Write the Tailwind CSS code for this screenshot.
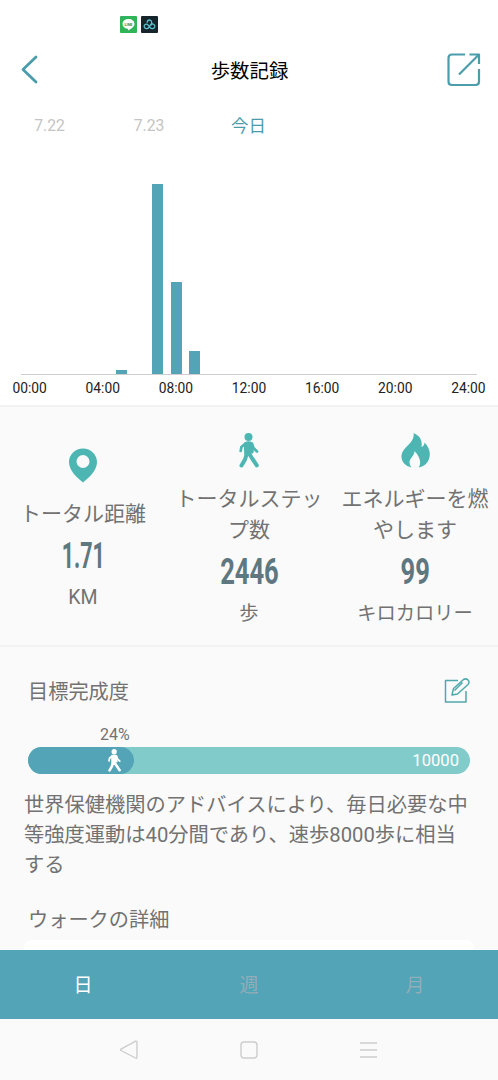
<!DOCTYPE html>
<html lang="ja">
<head>
<meta charset="utf-8">
<meta name="viewport" content="width=device-width, initial-scale=1">
<title>歩数記録</title>
<script src="https://cdn.jsdelivr.net/npm/@tailwindcss/browser@4"></script>
</head>
<body class="bg-[#fafafa]">
<svg class="hidden">
  <symbol id="walker" viewBox="0 0 20 35">
    <circle cx="9.500" cy="4" r="4" fill="currentColor"/>
    <path d="M6 10.500Q9.500 8.500 13 10.500L13.500 19L6.500 21Z" fill="currentColor" stroke="currentColor" stroke-width="2.500" stroke-linejoin="round"/>
    <path d="M6 11L2.400 14L1.700 18M13 11L14.500 15L18 18.500" fill="none" stroke="currentColor" stroke-width="2.700" stroke-linecap="round" stroke-linejoin="round"/>
    <path d="M8 20L6 26.500L2.500 32.500M10 20.500L13.500 26L17.800 32.300" fill="none" stroke="currentColor" stroke-width="4" stroke-linecap="round" stroke-linejoin="round"/>
  </symbol>
</svg>
<div class="flex h-[1080px] w-[498px] flex-col overflow-hidden bg-[#fafafa] font-['Roboto','Noto_Sans_CJK_JP',sans-serif] text-[#727272]">
  <section class="flex h-[405px] shrink-0 flex-col bg-white">
    <div class="flex h-10 gap-1 pt-4 pl-[120px]">
      <svg class="size-[17px]" viewBox="0 0 17 17"><rect width="17" height="17" rx="1" fill="#2fb457"/><path d="M8.500 3C5 3 2.500 5 2.500 8c0 2.700 2.300 4.400 5 4.800.7.100.6.700.5 1.700 3-1.600 6.500-3.800 6.500-6.500 0-3-2.600-5-6-5Z" fill="#fff"/><text x="8.500" y="9.500" text-anchor="middle" font-size="3.800" font-weight="700" fill="#2b8a48">LINE</text></svg>
      <svg class="size-[17px]" viewBox="0 0 17 17"><rect width="17" height="17" rx="1" fill="#15252b"/><g fill="none" stroke="#5cc2cc" stroke-width="1.300" stroke-linecap="round"><path d="M9.800 9C11.500 7 14.200 8.500 13.800 10.700C13.300 13 10.500 13.300 9.200 11.700L7.200 9.200C5.500 7 2.800 8.500 3.200 10.700C3.700 13 6.500 13.300 7.800 11.500L10.300 8C11.500 6 10 4 8.500 4Q6.300 4 6.200 6.300"/></g></svg>
    </div>
    <header class="flex h-[60px] items-center justify-between pr-[17px] pl-5">
      <svg class="h-[30px] w-[34px]" viewBox="0 0 34 30" fill="none" stroke="#4b9dac" stroke-width="2.800" stroke-linecap="round" stroke-linejoin="round"><path d="M16 2L3 14.500L16 27"/></svg>
      <h1 class="-ml-[2px] pt-[3px] text-[19.400px] text-black">歩数記録</h1>
      <svg class="h-[34px] w-[34px]" viewBox="0 0 34 34" fill="none" stroke="#4b9dac" stroke-width="2.200"><path d="M18 1.500H5Q1.500 1.500 1.500 5V28.500Q1.500 32 5 32H28.500Q32 32 32 28.500V16M22.500 1.500H32V11M32 1.500L12 21.500" stroke-linejoin="round"/></svg>
    </header>
    <nav class="flex h-[50px] items-center pt-[2px] text-[15.700px] text-[#c4c4c4]">
      <span class="w-[99px] text-center">7.22</span>
      <span class="w-[100px] text-center">7.23</span>
      <span class="w-[99px] text-center text-[17.500px] text-[#4b9dac]">今日</span>
    </nav>
    <div class="mx-[21px] grid h-[225px] shrink-0 grid-cols-25 items-end justify-items-center border-b-[1.500px] border-[#cfcfcf]">
      <div class="col-start-6 h-1 w-[11px] bg-[#53a4b7]"></div>
      <div class="col-start-8 h-[190px] w-[11px] bg-[#53a4b7]"></div>
      <div class="col-start-9 h-[92px] w-[11px] bg-[#53a4b7]"></div>
      <div class="col-start-10 h-[23px] w-[11px] bg-[#53a4b7]"></div>
    </div>
    <div class="-mx-[7px] grid h-[26px] shrink-0 grid-cols-7 items-center text-center text-[13.800px] text-[#222]">
      <span>00:00</span><span>04:00</span><span>08:00</span><span>12:00</span><span>16:00</span><span>20:00</span><span>24:00</span>
    </div>
  </section>

  <section class="grid h-[242px] shrink-0 grid-cols-3 items-center border-y-2 border-[#f2f2f2] pt-[7px] text-center">
    <div class="flex flex-col items-center">
      <svg class="h-[35px] w-7" viewBox="0 0 28 35"><path fill="#4db6b2" fill-rule="evenodd" d="M14 .5C6.300.5 0 6.500 0 14c0 8 7 15 14 20.500C21 29 28 22 28 14 28 6.500 21.700.5 14 .5ZM14 7a6.500 6.500 0 1 1 0 13 6.500 6.500 0 0 1 0-13Z"/></svg>
      <p class="mt-4 w-full text-[21px] leading-[31px]">トータル距離</p>
      <p class="mt-1.5 h-10 scale-x-[.58] text-[37px] leading-10 font-bold text-[#5f777e]">1.71</p>
      <p class="mt-[9px] text-[19.500px] leading-[26px]">KM</p>
    </div>
    <div class="flex flex-col items-center">
      <svg class="h-[35px] w-5 text-[#4db6b2]"><use href="#walker"/></svg>
      <p class="mt-4 w-full text-[21px] leading-[31px]">トータルステッ<br>プ数</p>
      <p class="mt-1.5 h-10 scale-x-[.69] text-[37px] leading-10 font-bold text-[#5f777e]">2446</p>
      <p class="mt-[9px] text-[19.300px] leading-[26px]">歩</p>
    </div>
    <div class="flex flex-col items-center">
      <svg class="h-[35px] w-[29px]" viewBox="0 0 29 35"><path fill="#4db6b2" d="M12.500 0C21 4 21 9 20.500 14C22.500 13.500 23.500 11.500 23.500 9.500C28 14 29.500 19 28.500 24C27.500 29.500 23.500 33.500 17.500 34.500C20.500 31 19.500 24 13.500 18C13.500 23 8.500 25 8.500 29.500Q8.500 32.500 10.500 34.500C4 33 0 28.500 .5 22.500C1 14 14.500 10 12.500 0Z"/></svg>
      <p class="mt-4 w-full text-[21px] leading-[31px]">エネルギーを燃<br>やします</p>
      <p class="mt-1.5 h-10 scale-x-[.69] text-[37px] leading-10 font-bold text-[#5f777e]">99</p>
      <p class="mt-[9px] text-[19.300px] leading-[26px]">キロカロリー</p>
    </div>
  </section>

  <section class="flex h-[303px] shrink-0 flex-col pt-7">
    <div class="flex h-8 shrink-0 items-center justify-between px-7 text-[20.200px]">
      <h2 class="pt-[3px]">目標完成度</h2>
      <svg class="h-[26px] w-[26px]" viewBox="0 0 26 26" fill="none" stroke="#4fa9ab" stroke-width="1.500" stroke-linejoin="round"><path d="M14 2.500H1.500V24H22V13M8 17L9.500 10.500L19.500 1.500Q22 0 24 2Q26 4 24 6.500L13.500 16ZM18.500 4.500L10.500 12.500"/></svg>
    </div>
    <p class="mt-[15px] ml-[100px] h-[25px] shrink-0 text-base leading-[25px]">24%</p>
    <div class="mx-7 flex h-[27px] w-[442px] shrink-0 items-center justify-between rounded-full bg-[#81cbca]">
      <div class="flex h-full w-[24%] items-center justify-end rounded-full bg-[#53a4b7] pr-3 text-white"><svg class="h-[23px] w-[15px]"><use href="#walker"/></svg></div>
      <span class="pt-px pr-[11px] text-[16.600px] text-white">10000</span>
    </div>
    <p class="mt-4 ml-6 shrink-0 text-[20.250px] leading-[30px] whitespace-nowrap">世界保健機関のアドバイスにより、毎日必要な中<br>等強度運動は40分間であり、速歩8000歩に相当<br>する</p>
    <h2 class="mt-[25px] ml-7 shrink-0 text-[20.200px] leading-[30px]">ウォークの詳細</h2>
    <div class="mx-6 mt-[5px] h-5 shrink-0 rounded-t-lg bg-white"></div>
  </section>

  <nav class="z-10 grid h-[69px] shrink-0 grid-cols-3 items-center bg-[#53a4b7] pt-[3px] text-center text-[19px] text-[#92adb7]">
    <span class="text-white">日</span><span>週</span><span>月</span>
  </nav>
  <footer class="flex h-[61px] shrink-0 items-center justify-between px-[119px]">
    <svg class="size-5" viewBox="0 0 20 20" fill="none" stroke="#cdcdcd" stroke-width="1.400" stroke-linejoin="round"><path d="M2 9.200L16.500 1.200Q18 .8 18 2.500V17Q18 18.800 16.500 18L2 10.500Q1 9.800 2 9.200Z"/></svg>
    <svg class="size-5" viewBox="0 0 20 20" fill="none" stroke="#cdcdcd" stroke-width="1.400"><rect x="2" y="2" width="16" height="16" rx="3"/></svg>
    <svg class="size-5" viewBox="0 0 20 20" fill="none" stroke="#cdcdcd" stroke-width="1.400"><path d="M1 3H18M1 10H18M1 17H18"/></svg>
  </footer>
</div>
</body>
</html>
